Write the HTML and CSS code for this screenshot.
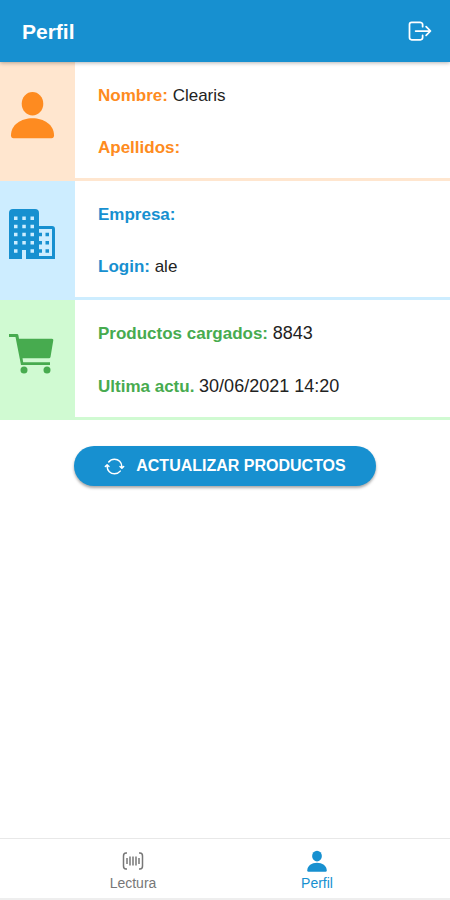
FILE: index.html
```html
<!DOCTYPE html>
<html lang="es">
<head>
<meta charset="utf-8">
<meta name="viewport" content="width=device-width, initial-scale=1">
<title>Perfil</title>
<link rel="stylesheet" href="styles.css">
</head>
<body>
<header class="toolbar">
  <h1 class="toolbar-title">Perfil</h1>
  <button class="toolbar-button" type="button" aria-label="Salir">
    <svg class="icon-logout" viewBox="0 0 512 512" aria-hidden="true"><path d="M304 336v40a40 40 0 0 1-40 40H104a40 40 0 0 1-40-40V136a40 40 0 0 1 40-40h152c22 0 48 18 48 40v40M368 336l80-80-80-80M176 256h256"/></svg>
  </button>
</header>

<main class="content">
  <section class="card card-user">
    <div class="card-icon">
      <svg viewBox="0 0 53 53" aria-hidden="true"><ellipse cx="26.500" cy="15.700" rx="10.800" ry="11.700"/><path d="M7.500 50.300Q5 50.300 5 47.300C5 37 15 30.300 26.500 30.300S48 37 48 47.300q0 3-2.500 3z"/></svg>
    </div>
    <div class="card-lines">
      <p><strong>Nombre:</strong> <span>Clearis</span></p>
      <p><strong>Apellidos:</strong></p>
    </div>
  </section>

  <section class="card card-company">
    <div class="card-icon">
      <svg viewBox="0 0 53 53" aria-hidden="true">
        <path fill-rule="evenodd" d="M3 52V6q0-4 4-4h22q4 0 4 4v13h13q3 0 3 3v30H20v-9h-4v9zM33 22v27h13V22z"/>
        <path class="window-light" d="M8 9.500h3.500v3.500H8zm8.300 0h3.500v3.500h-3.500zm8.200 0H28v3.500h-3.500zM8 17.700h3.500v3.500H8zm8.300 0h3.500v3.500h-3.500zm8.200 0H28v3.500h-3.500zM8 25.700h3.500v3.500H8zm8.300 0h3.500v3.500h-3.500zm8.200 0H28v3.500h-3.500zM8 34h3.500v3.500H8zm8.300 0h3.500v3.500h-3.500zm8.200 0H28v3.500h-3.500zM8 42.300h3.500v3.500H8zm16.500 0H28v3.500h-3.500z"/>
        <path d="M33 25.700h3v3.500h-3zm6.500 0H43v3.500h-3.500zM33 34h3v3.500h-3zm6.500 0H43v3.500h-3.500zM33 42.300h3v3.500h-3zm6.500 0H43v3.500h-3.500z"/>
      </svg>
    </div>
    <div class="card-lines">
      <p><strong>Empresa:</strong></p>
      <p><strong>Login:</strong> <span>ale</span></p>
    </div>
  </section>

  <section class="card card-products">
    <div class="card-icon">
      <svg viewBox="0 0 53 53" aria-hidden="true">
        <path d="M3 8h8q1.200 0 1.400 1.200l.6 3.500h33q1.600 0 1.300 1.600L44.500 31q-.3 1.300-1.500 1.300H16.500l.7 4H44V39H15L9.500 11H3z"/>
        <circle cx="18" cy="44" r="3.500"/><circle cx="41" cy="44" r="3.500"/>
      </svg>
    </div>
    <div class="card-lines">
      <p><strong>Productos cargados:</strong> <span class="figure">8843</span></p>
      <p><strong>Ultima actu.</strong> <span class="figure">30/06/2021 14:20</span></p>
    </div>
  </section>

  <button class="refresh" type="button">
    <svg class="icon-sync" viewBox="0 0 512 512" aria-hidden="true"><path d="M434.670 285.590v-29.800c0-98.730-80.240-178.790-179.200-178.790a179 179 0 0 0-140.140 67.360m-38.530 82v29.800C76.800 355 157 435 256 435a180.450 180.450 0 0 0 140-66.920M32 256l44-44 46 44M480 256l-44 44-46-44"/></svg>
    ACTUALIZAR PRODUCTOS
  </button>
</main>

<nav class="tabs">
  <a class="tab" href="#lectura">
    <svg viewBox="0 0 24 24" aria-hidden="true"><path class="tab-stroke" d="M6 4H5Q2.500 4 2.500 7v10q0 3 2.500 3h1M18 4h1q2.500 0 2.500 3v10q0 3-2.500 3h-1M6 9v6M9 7.500v9M12 7.500v9M15 7.500v9M18 9v6"/></svg>
    <span>Lectura</span>
  </a>
  <a class="tab tab-selected" href="#perfil" aria-current="page">
    <svg viewBox="0 0 53 53" aria-hidden="true"><ellipse cx="26.500" cy="15.700" rx="10.800" ry="11.700"/><path d="M7.500 50.300Q5 50.300 5 47.300C5 37 15 30.300 26.500 30.300S48 37 48 47.300q0 3-2.500 3z"/></svg>
    <span>Perfil</span>
  </a>
</nav>
</body>
</html>
```
FILE: styles.css
```css
* {
  box-sizing: border-box;
}

body {
  --blue: #1790d0;
  display: flex;
  flex-direction: column;
  min-height: 100vh;
  margin: 0;
  background: #fff;
  color: #222;
  font-family: "Liberation Sans", Arial, sans-serif;
  font-size: 17px;
}

button {
  border: 0;
  font-family: inherit;
  color: #fff;
  cursor: pointer;
}

svg {
  display: block;
  fill: currentColor;
}

.toolbar {
  display: flex;
  align-items: center;
  justify-content: space-between;
  height: 62px;
  padding: 0 16px 0 22px;
  background: var(--blue);
  color: #fff;
  box-shadow: 0 1px 4px rgba(0, 0, 0, 0.3);
  z-index: 1;
}

.toolbar-title {
  margin: 0;
  padding-top: 2px;
  font-size: 21px;
  line-height: 28px;
}

.toolbar-button {
  padding: 0;
  background: none;
}

.icon-logout {
  width: 28px;
  height: 28px;
}

.icon-logout,
.icon-sync {
  fill: none;
  stroke: currentColor;
  stroke-width: 32;
  stroke-linecap: round;
  stroke-linejoin: round;
}

.content {
  display: flex;
  flex: 1;
  flex-direction: column;
}

.card {
  display: flex;
}

.card-user {
  --tint: #ffe6cf;
  --accent: #fe8b20;
}

.card-company {
  --tint: #cdedff;
  --accent: var(--blue);
}

.card-products {
  --tint: #d0fad2;
  --accent: #47ab4f;
}

.card-icon {
  flex: none;
  width: 75px;
  padding: 26px 0 0 6px;
  background: var(--tint);
  color: var(--accent);
}

.card-icon svg {
  width: 53px;
  height: 53px;
}

.window-light {
  fill: var(--tint);
}

.card-lines {
  flex: 1;
  padding: 7px 0 4px 23px;
  border-bottom: 3px solid var(--tint);
}

.card-lines p {
  margin: 0;
  line-height: 53px;
}

.card-lines p + p {
  line-height: 52px;
}

.card-lines strong {
  color: var(--accent);
}

.figure {
  font-size: 18px;
}

.refresh {
  display: flex;
  align-items: center;
  align-self: center;
  gap: 11px;
  height: 40px;
  margin-top: 26px;
  padding: 0 30px;
  border-radius: 20px;
  background: var(--blue);
  box-shadow: 0 2px 3px rgba(0, 0, 0, 0.35);
  font-size: 16px;
  font-weight: bold;
}

.icon-sync {
  width: 21px;
  height: 21px;
  stroke-width: 36;
}

.tabs {
  display: flex;
  justify-content: center;
  height: 62px;
  border-top: 1px solid #e8e8e8;
  border-bottom: 2px solid #eee;
}

.tab {
  display: flex;
  flex: 1;
  flex-direction: column;
  align-items: center;
  gap: 1px;
  max-width: 184px;
  padding-top: 10px;
  color: #777;
  font-size: 14px;
  line-height: 18px;
  text-decoration: none;
}

.tab svg {
  width: 24px;
  height: 24px;
}

.tab-stroke {
  fill: none;
  stroke: currentColor;
  stroke-width: 1.5;
}

.tab-selected {
  color: var(--blue);
}
```
